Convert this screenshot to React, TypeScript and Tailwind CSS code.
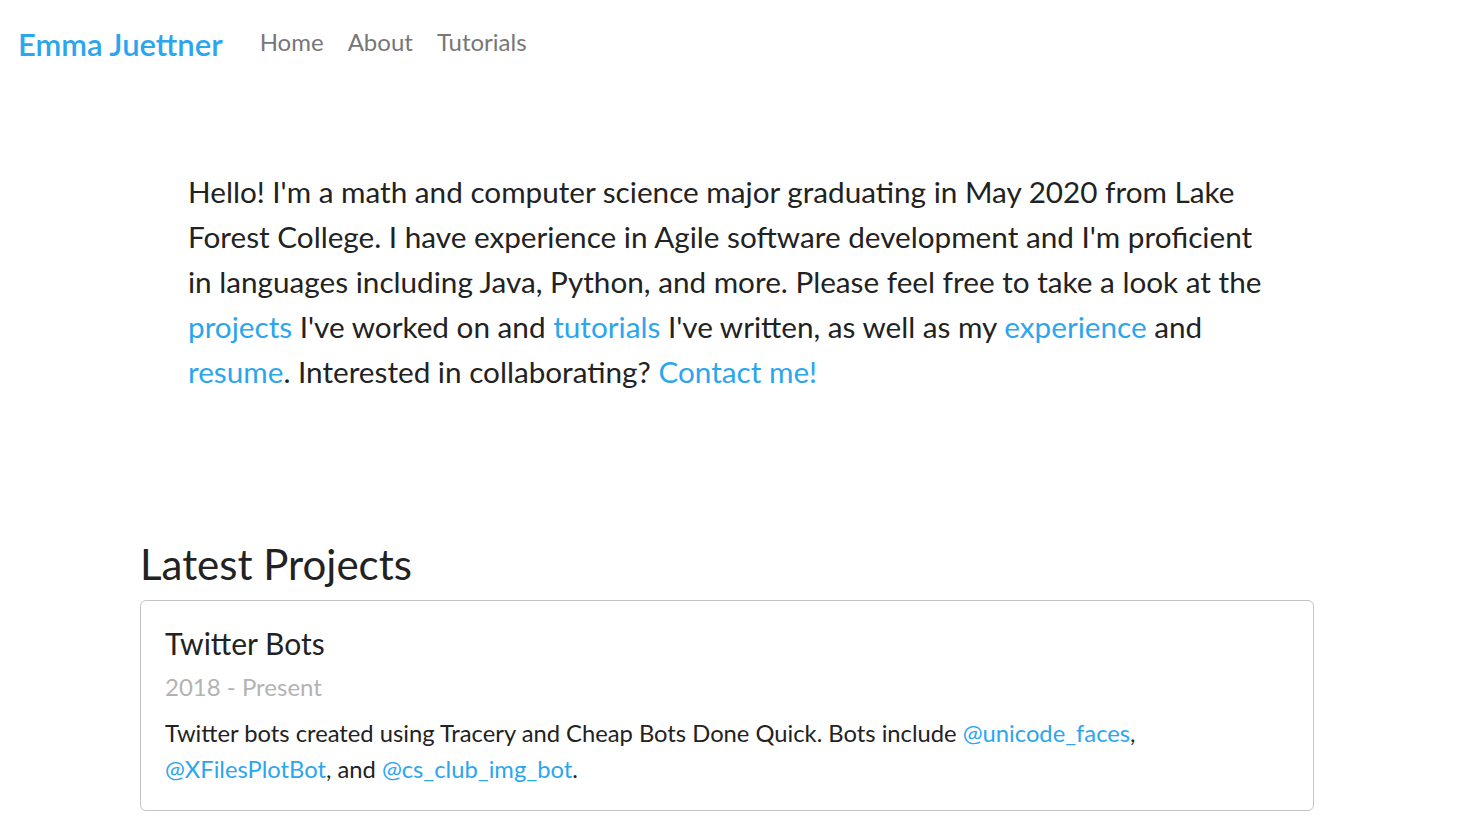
import React from 'react';

const font = { fontFamily: 'Lato, "Noto Sans", sans-serif' };

const A = ({ children }: { children: React.ReactNode }) => (
  <a href="#" className="text-[#2ba6ee] no-underline">{children}</a>
);

export default function App() {
  return (
    <div style={font} className="min-h-screen bg-white text-[#222222]">
      {/* Navbar */}
      <nav className="flex items-center h-[88px] px-[18px]">
        <a href="#" className="text-[31px] leading-[45px] font-semibold text-[#2ba6ee] mr-[37px]">Emma Juettner</a>
        <ul className="flex items-center gap-[24px] text-[24px] leading-[36px] text-[#777777] pb-[5px]">
          <li><a href="#">Home</a></li>
          <li><a href="#">About</a></li>
          <li><a href="#">Tutorials</a></li>
        </ul>
      </nav>

      <main className="pl-[140px] pr-[145px]">
        {/* Intro */}
        <section className="pt-[81px] pb-[145px] pl-[48px] pr-[40px]">
          <p className="text-[29.7px] leading-[45px]">
            Hello! I'm a math and computer science major graduating in May 2020 from Lake Forest College. I have
            experience in Agile software development and I'm proficient in languages including Java, Python, and
            more. Please feel free to take a look at the <A>projects</A> I've worked on and <A>tutorials</A> I've
            written, as well as my <A>experience</A> and <A>resume</A>. Interested in collaborating? <A>Contact me!</A>
          </p>
        </section>

        {/* Projects */}
        <section>
          <h2 className="text-[42px] leading-[50px] mb-[11px]">Latest Projects</h2>
          <div className="border border-[#c4c4c4] rounded-[6px] px-[24px] pt-[24px] pb-[23px]">
            <h5 className="text-[30px] leading-[36px] mb-[8px]">Twitter Bots</h5>
            <h6 className="text-[24px] leading-[36px] text-[#b3b3b3] mb-[10px]">2018 - Present</h6>
            <p className="text-[23.75px] leading-[36px]">
              Twitter bots created using Tracery and Cheap Bots Done Quick. Bots include <A>@unicode_faces</A>,{' '}
              <A>@XFilesPlotBot</A>, and <A>@cs_club_img_bot</A>.
            </p>
          </div>
        </section>
      </main>
    </div>
  );
}
